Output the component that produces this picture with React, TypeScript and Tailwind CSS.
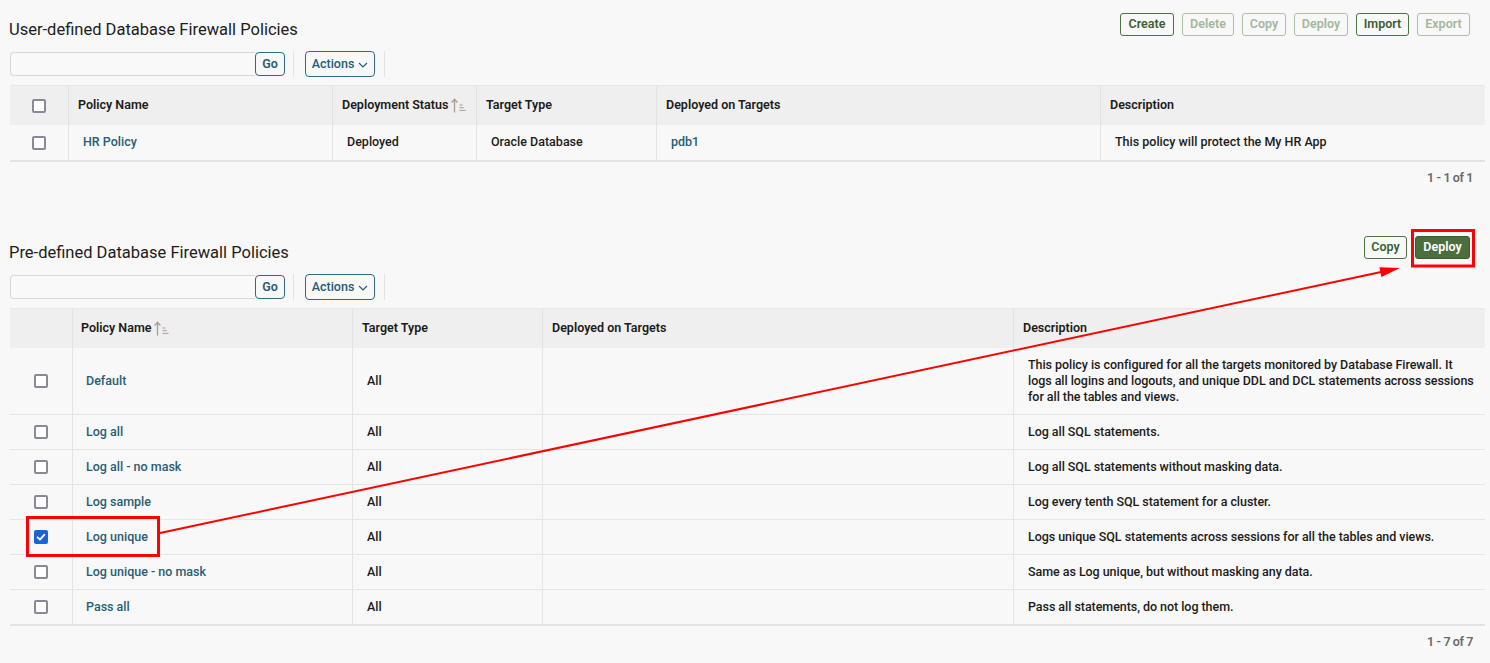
import React from "react";

function Checkbox({ checked }: { checked?: boolean }) {
  if (checked) {
    return (
      <span className="flex h-[14px] w-[14px] items-center justify-center rounded-[2px] bg-[#1766d6]">
        <svg width="10" height="10" viewBox="0 0 10 10">
          <path d="M1.6 5.3 L4 7.6 L8.4 2.6" fill="none" stroke="white" strokeWidth="1.8" strokeLinecap="round" strokeLinejoin="round" />
        </svg>
      </span>
    );
  }
  return <span className="block h-[14px] w-[14px] rounded-[2px] border-2 border-[#8c8997] bg-white" />;
}

function SortIcon() {
  return (
    <svg width="17" height="15" viewBox="0 0 17 15" className="ml-[3px]">
      <path d="M3.5 14.5 V1.5 M0.6 4.5 L3.5 1.2 L6.4 4.5" fill="none" stroke="#a89e90" strokeWidth="1.3" />
      <path d="M8.5 7 H11.5 M8.5 9.7 H12.8 M8.5 12.4 H14.5" stroke="#a89e90" strokeWidth="1" />
    </svg>
  );
}

function Chevron() {
  return (
    <svg width="10" height="6" viewBox="0 0 10 6" className="mt-[2px]">
      <path d="M1 1 L5 5 L9 1" fill="none" stroke="#1e5e76" strokeWidth="1.2" />
    </svg>
  );
}

function Toolbar() {
  return (
    <div className="flex h-[26px] items-center">
      <div className="h-[24px] w-[245px] rounded-l-[4px] border border-r-0 border-[#d8d8d8] bg-[#f9f9f9]" />
      <div className="flex h-[24px] w-[30px] items-center justify-center rounded-[4px] border border-[#2f6a80] bg-[#f8f8f8] text-[12.5px] font-semibold text-[#1e5e76]">
        Go
      </div>
      <div className="ml-[8px] h-[26px] w-px bg-[#e3e3e3]" />
      <div className="ml-[11px] flex h-[26px] w-[70px] items-center justify-center gap-[4px] rounded-[4px] border border-[#2f6a80] text-[12.5px] font-medium text-[#1e5e76]">
        Actions <Chevron />
      </div>
      <div className="ml-[9px] h-[26px] w-px bg-[#e3e3e3]" />
    </div>
  );
}

function GBtn({ children, w, disabled, primary }: { children: React.ReactNode; w: string; disabled?: boolean; primary?: boolean }) {
  let cls = "border-[#4d7341] text-[#3c5e33] bg-[#f8f8f8]";
  if (disabled) cls = "border-[#abc0a4] text-[#a3b79c] bg-[#f8f8f8]";
  if (primary) cls = "border-[#3c5a32] text-white bg-[#4c6e3f]";
  return (
    <div className={`flex h-[23px] items-center justify-center rounded-[3px] border text-[12.5px] font-semibold ${cls} ${w}`}>
      {children}
    </div>
  );
}

const dark = "text-[#1c1b19]";
const link = "text-[#2a5d72]";

export default function App() {
  const pre = [
    { name: "Default", h: "h-[66px]", desc: (<>This policy is configured for all the targets monitored by Database Firewall. It<br />logs all logins and logouts, and unique DDL and DCL statements across sessions<br />for all the tables and views.</>) },
    { name: "Log all", h: "h-[35px]", desc: "Log all SQL statements." },
    { name: "Log all - no mask", h: "h-[35px]", desc: "Log all SQL statements without masking data." },
    { name: "Log sample", h: "h-[35px]", desc: "Log every tenth SQL statement for a cluster." },
    { name: "Log unique", h: "h-[35px]", desc: "Logs unique SQL statements across sessions for all the tables and views.", checked: true },
    { name: "Log unique - no mask", h: "h-[35px]", desc: "Same as Log unique, but without masking any data." },
    { name: "Pass all", h: "h-[35px]", desc: "Pass all statements, do not log them." },
  ];

  return (
    <div className="relative h-[663px] w-[1490px] overflow-hidden bg-[#f8f8f8] pl-[10px] pr-[5px] font-['Roboto','Liberation_Sans',sans-serif] text-[12.5px] text-[#1c1b19]">
      {/* Section 1 header */}
      <div className="flex h-[51px] items-start justify-between">
        <div className="-ml-[1px] mt-[20px] text-[16.5px] leading-[20px] text-[#1d1c1a]">User-defined Database Firewall Policies</div>
        <div className="mr-[15px] mt-[13px] flex gap-[8px]">
          <GBtn w="w-[54px]">Create</GBtn>
          <GBtn w="w-[52px]" disabled>Delete</GBtn>
          <GBtn w="w-[44px]" disabled>Copy</GBtn>
          <GBtn w="w-[54px]" disabled>Deploy</GBtn>
          <GBtn w="w-[53px]">Import</GBtn>
          <GBtn w="w-[53px]" disabled>Export</GBtn>
        </div>
      </div>
      <Toolbar />

      {/* Table 1 */}
      <div className="mt-[8px] border-b-2 border-[#e2e2e2]">
        <div className="grid h-[40px] grid-cols-[58px_264px_144px_180px_444px_1fr] border-t border-[#e8e8e8] bg-[#efefef] font-semibold">
          <div className="flex items-center justify-center"><Checkbox /></div>
          <div className="flex items-center border-l border-[#e2e2e2] pl-[9px]">Policy Name</div>
          <div className="flex items-center border-l border-[#e2e2e2] pl-[9px]">Deployment Status<SortIcon /></div>
          <div className="flex items-center border-l border-[#e2e2e2] pl-[9px]">Target Type</div>
          <div className="flex items-center border-l border-[#e2e2e2] pl-[9px]">Deployed on Targets</div>
          <div className="flex items-center border-l border-[#e2e2e2] pl-[9px]">Description</div>
        </div>
        <div className="grid h-[35px] grid-cols-[58px_264px_144px_180px_444px_1fr] font-medium">
          <div className="flex items-center justify-center"><Checkbox /></div>
          <div className={`flex items-center border-l border-[#e4e4e4] pl-[14px] ${link}`}>HR Policy</div>
          <div className={`flex items-center border-l border-[#e4e4e4] pl-[14px] ${dark}`}>Deployed</div>
          <div className={`flex items-center border-l border-[#e4e4e4] pl-[14px] ${dark}`}>Oracle Database</div>
          <div className={`flex items-center border-l border-[#e4e4e4] pl-[14px] ${link}`}>pdb1</div>
          <div className={`flex items-center border-l border-[#e4e4e4] pl-[14px] ${dark}`}>This policy will protect the My HR App</div>
        </div>
      </div>
      <div className="mr-[12px] flex h-[32px] items-center justify-end text-[12.5px] font-semibold tracking-[-0.4px] text-[#6a6a6a]">1 - 1 of 1</div>

      {/* Section 2 header */}
      <div className="flex h-[80px] items-start justify-between">
        <div className="-ml-[1px] mt-[49px] text-[16.5px] leading-[20px] text-[#1d1c1a]">Pre-defined Database Firewall Policies</div>
        <div className="mr-[15px] mt-[42px] flex gap-[8px]">
          <GBtn w="w-[43px]">Copy</GBtn>
          <GBtn w="w-[55px]" primary>Deploy</GBtn>
        </div>
      </div>
      <Toolbar />

      {/* Table 2 */}
      <div className="mt-[8px] border-b-2 border-[#e2e2e2]">
        <div className="grid h-[40px] grid-cols-[62px_280px_190px_471px_1fr] border-t border-[#e8e8e8] bg-[#efefef] font-semibold">
          <div className="flex items-center justify-center" />
          <div className="flex items-center border-l border-[#e2e2e2] pl-[8px]">Policy Name<SortIcon /></div>
          <div className="flex items-center border-l border-[#e2e2e2] pl-[9px]">Target Type</div>
          <div className="flex items-center border-l border-[#e2e2e2] pl-[9px]">Deployed on Targets</div>
          <div className="flex items-center border-l border-[#e2e2e2] pl-[9px]">Description</div>
        </div>
        {pre.map((r, i) => (
          <div key={r.name} className={`grid grid-cols-[62px_280px_190px_471px_1fr] font-medium ${r.h} ${i > 0 ? "border-t border-[#e5e5e5]" : ""}`}>
            <div className="flex items-center justify-center"><Checkbox checked={r.checked} /></div>
            <div className={`flex items-center border-l border-[#e4e4e4] pl-[13px] ${link}`}>{r.name}</div>
            <div className={`flex items-center border-l border-[#e4e4e4] pl-[14px] ${dark}`}>All</div>
            <div className="border-l border-[#e4e4e4]" />
            <div className={`flex items-center whitespace-nowrap border-l border-[#e4e4e4] pl-[14px] leading-[16px] tracking-[-0.05px] ${dark}`}>{r.desc}</div>
          </div>
        ))}
      </div>
      <div className="mr-[12px] flex h-[32px] items-center justify-end text-[12.5px] font-semibold tracking-[-0.4px] text-[#6a6a6a]">1 - 7 of 7</div>

      {/* Annotations */}
      <svg className="pointer-events-none absolute left-0 top-0" width="1490" height="663" viewBox="0 0 1490 663">
        <rect x="27.5" y="517.5" width="131" height="38" fill="none" stroke="#f00" strokeWidth="3" />
        <rect x="1412.5" y="230.5" width="61" height="35.5" fill="none" stroke="#f00" strokeWidth="3" />
        <line x1="160" y1="533" x2="1381" y2="272" stroke="#f00" strokeWidth="2" />
        <polygon points="1400,268 1381.4,277.1 1379.4,267.3" fill="#f00" />
      </svg>
    </div>
  );
}
